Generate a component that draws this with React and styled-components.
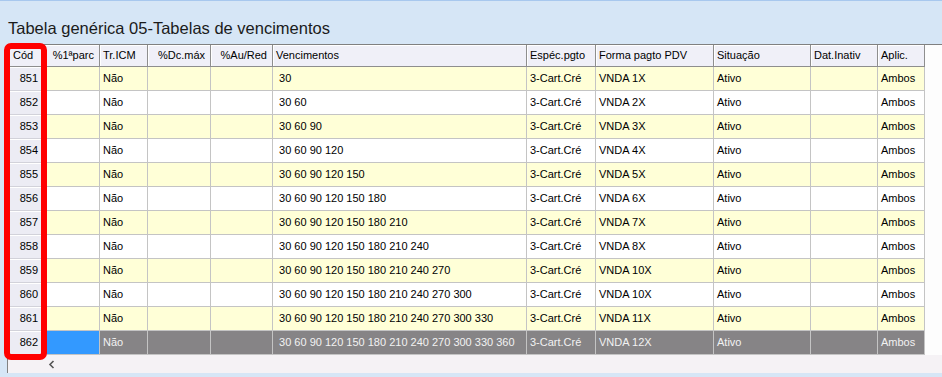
import React from 'react';
import styled, { createGlobalStyle } from 'styled-components';

const GlobalStyle = createGlobalStyle`
    html, body {
        margin: 0;
        padding: 0;
        background: #d6e6f6;
    }
    body {
        font-family: "Liberation Sans", Arial, sans-serif;
    }
`;

const columns = [
    { label: 'Cód', width: 34 },
    { label: '%1ªparc', width: 58, right: true },
    { label: 'Tr.ICM', width: 48 },
    { label: '%Dc.máx', width: 63, right: true },
    { label: '%Au/Red', width: 62, right: true },
    { label: 'Vencimentos', width: 254 },
    { label: 'Espéc.pgto', width: 69 },
    { label: 'Forma pagto PDV', width: 118 },
    { label: 'Situação', width: 97 },
    { label: 'Dat.Inativ', width: 67 },
    { label: 'Aplic.', width: 47 },
];

const template = columns.map((c) => `${c.width}px`).join(' ');

const formas = ['1X', '2X', '3X', '4X', '5X', '6X', '7X', '8X', '10X', '10X', '11X', '12X'];

const rows = formas.map((forma, i) => ({
    cod: 851 + i,
    venc: Array.from({ length: i + 1 }, (_, k) => 30 * (k + 1)).join(' '),
    forma: `VNDA ${forma}`,
}));

const Page = styled.div`
    position: relative;
    height: 377px;
    box-sizing: border-box;
    border-top: 1px solid #a8c8ee;
    overflow: hidden;
`;

const Title = styled.div`
    height: 43px;
    box-sizing: border-box;
    padding: 17px 0 0 8px;
    font-size: 16.5px;
    line-height: 20px;
    color: #1b1b1b;
`;

const Panel = styled.div`
    margin-left: 7px;
    height: 329px;
    border-left: 1px solid #828282;
    background: #f5f2f5;
    display: flex;
    flex-direction: column;
`;

const GridArea = styled.div`
    background: #fdfdfd;
    border-top: 1px solid #808080;
`;

const Row = styled.div`
    display: grid;
    grid-template-columns: ${template};
    height: ${(p) => (p.$head ? 22 : 24)}px;
    font-size: 11px;
`;

const HeaderCell = styled.div`
    box-sizing: border-box;
    background: #f0f0f8;
    border-right: 1px solid #8e8e8e;
    border-bottom: 1px solid #8e8e8e;
    box-shadow: inset 1px 1px 0 #ffffff;
    padding: 0 5px 0 ${(p) => (p.$first ? 5 : 3)}px;
    line-height: 21px;
    text-align: ${(p) => (p.$right ? 'right' : 'left')};
    color: #000;
    white-space: nowrap;
    overflow: hidden;
`;

const RowHead = styled.div`
    box-sizing: border-box;
    background: #ececf4;
    border-right: 1px solid #a6a6ae;
    border-bottom: 1px solid #d2d2da;
    box-shadow: inset 1px 1px 0 #ffffff;
    padding-right: 3px;
    text-align: right;
    line-height: 23px;
    color: #000;
`;

const Cell = styled.div`
    box-sizing: border-box;
    border-right: 1px solid #c4c4c4;
    border-bottom: 1px solid #c4c4c4;
    padding: 0 3px;
    line-height: 23px;
    white-space: pre;
    overflow: hidden;
    background: ${(p) => (p.$focus ? '#3399ff' : p.$selected ? '#868486' : p.$odd ? '#ffffd7' : '#ffffff')};
    color: ${(p) => (p.$selected ? '#f2f2f2' : '#000')};
`;

const ScrollBar = styled.div`
    flex: 1;
    display: flex;
    align-items: center;
    padding-left: 40px;
`;

const Highlight = styled.div`
    position: absolute;
    left: 4px;
    top: 42px;
    width: 43px;
    height: 317px;
    box-sizing: border-box;
    border: 6px solid #ff0000;
    border-radius: 7px;
    pointer-events: none;
`;

export default function App() {
    return (
        <Page>
            <GlobalStyle />
            <Title>Tabela genérica 05-Tabelas de vencimentos</Title>
            <Panel>
                <GridArea>
                    <Row $head>
                        {columns.map((c, i) => (
                            <HeaderCell key={c.label} $right={c.right} $first={i === 0}>
                                {c.label}
                            </HeaderCell>
                        ))}
                    </Row>
                    {rows.map((r, i) => {
                        const odd = i % 2 === 0;
                        const sel = i === rows.length - 1;
                        const values = ['', 'Não', '', '', ` ${r.venc}`, '3-Cart.Cré', r.forma, 'Ativo', '', 'Ambos'];
                        return (
                            <Row key={r.cod}>
                                <RowHead>{r.cod}</RowHead>
                                {values.map((v, k) => (
                                    <Cell key={k} $odd={odd} $selected={sel} $focus={sel && k === 0}>
                                        {v}
                                    </Cell>
                                ))}
                            </Row>
                        );
                    })}
                </GridArea>
                <ScrollBar>
                    <svg width="8" height="9" viewBox="0 0 8 9">
                        <path d="M5.5 1 L2 4.5 L5.5 8" fill="none" stroke="#555" strokeWidth="1.6" />
                    </svg>
                </ScrollBar>
            </Panel>
            <Highlight />
        </Page>
    );
}
